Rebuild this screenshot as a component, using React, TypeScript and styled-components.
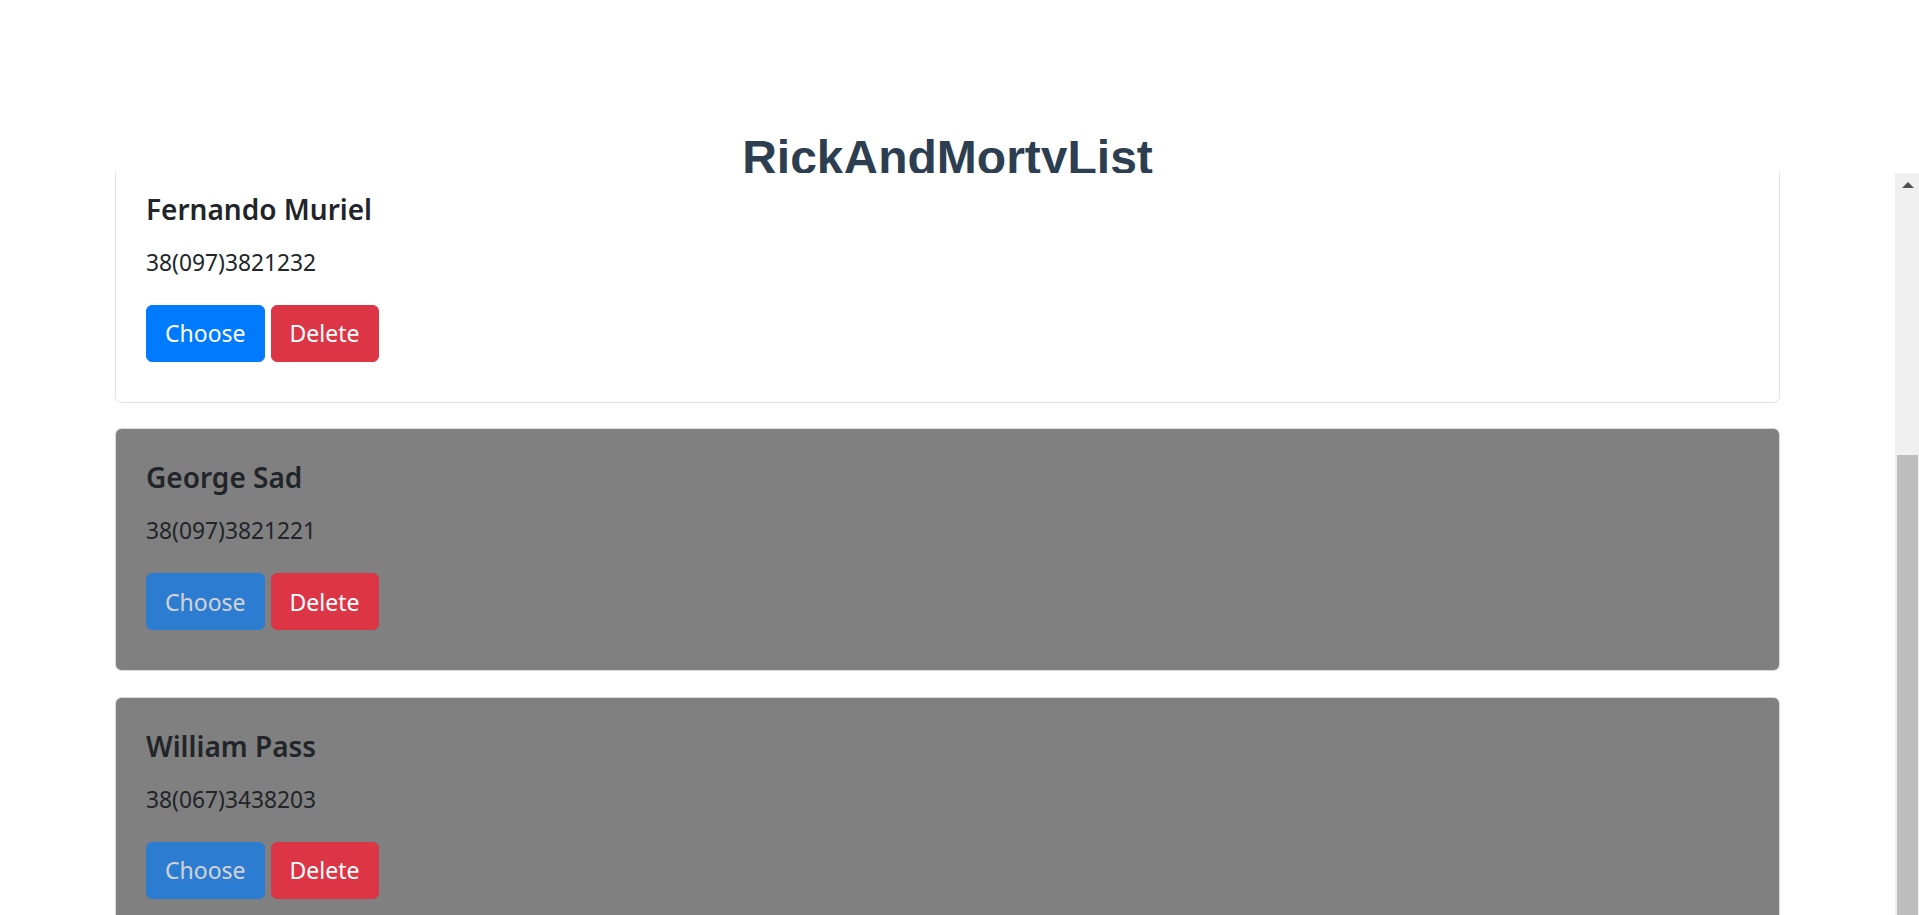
import React, { useLayoutEffect, useRef } from "react";
import styled, { createGlobalStyle } from "styled-components";

const GlobalStyle = createGlobalStyle`
  html, body {
    margin: 0;
    padding: 0;
    height: 100%;
    overflow: hidden;
    background: #ffffff;
  }
  * { box-sizing: border-box; }
`;

const Page = styled.div`
  height: 100vh;
  display: flex;
  flex-direction: column;
  overflow: hidden;
  font-family: "Noto Sans", "Open Sans", sans-serif;
  color: #212529;
`;

const Header = styled.header`
  flex: none;
  height: 173px;
  overflow: hidden;
  padding: 130px 24px 0 0;
  text-align: center;
`;

const Title = styled.h1`
  margin: 0;
  font-family: "Liberation Sans", Arial, sans-serif;
  font-weight: 700;
  font-size: 48px;
  line-height: 55px;
  color: #2c3e50;
`;

const ListArea = styled.main`
  flex: none;
  height: 100vh;
  display: flex;
`;

const Viewport = styled.div`
  flex: 1;
  min-width: 0;
  height: 100%;
  overflow: hidden;
`;

const ListContent = styled.div`
  padding: 150px 115px 0 115px;
`;

const ScrollBar = styled.div`
  flex: none;
  width: 24px;
  height: 100%;
  display: flex;
  flex-direction: column;
  background: #f0f0f0;
`;

const ScrollButton = styled.div`
  flex: none;
  height: 24px;
  display: flex;
  align-items: center;
  justify-content: center;
  padding-bottom: 1px;
`;

const UpArrow = styled.span`
  width: 0;
  height: 0;
  border-left: 6px solid transparent;
  border-right: 6px solid transparent;
  border-bottom: 6px solid #505050;
  margin-left: 1px;
`;

const Thumb = styled.div<{ $offset: number; $size: number }>`
  flex: none;
  margin: ${(p) => p.$offset}px 1px 0 2px;
  height: ${(p) => p.$size}px;
  background: #bdbdbd;
`;

const Card = styled.section<{ $chosen: boolean }>`
  margin-bottom: 25.5px;
  border: 1.5px solid ${(p) => (p.$chosen ? "#d9d9d9" : "#e0e0e0")};
  border-radius: 6px;
  background-color: ${(p) => (p.$chosen ? "#808080" : "#ffffff")};
  background-clip: padding-box;
  padding: 30px 30px 40px 30px;
`;

const Name = styled.h5`
  margin: 0 0 18px 0;
  font-size: 28px;
  font-weight: 600;
  line-height: 36px;
  color: #212529;
`;

const Phone = styled.p`
  margin: 0 0 24px 0;
  font-size: 22.8px;
  line-height: 36px;
  color: #212529;
`;

const Actions = styled.div`
  display: flex;
  gap: 6px;
`;

const Button = styled.button<{ $variant: "primary" | "danger" }>`
  height: 57px;
  padding: 9px 18px;
  border: 1.5px solid ${(p) => (p.$variant === "primary" ? "#007bff" : "#dc3545")};
  border-radius: 6px;
  background: ${(p) => (p.$variant === "primary" ? "#007bff" : "#dc3545")};
  color: #ffffff;
  font-family: "Noto Sans", "Open Sans", sans-serif;
  font-size: 23px;
  line-height: 36px;
  cursor: pointer;

  &:disabled {
    opacity: 0.65;
    cursor: default;
  }
`;

type Contact = { name: string; phone: string; chosen: boolean };

const contacts: Contact[] = [
  { name: "Adam Smith", phone: "38(050)1234567", chosen: false },
  { name: "Fernando Muriel", phone: "38(097)3821232", chosen: false },
  { name: "George Sad", phone: "38(097)3821221", chosen: true },
  { name: "William Pass", phone: "38(067)3438203", chosen: true },
  { name: "Mark Twist", phone: "38(063)5512098", chosen: false },
];

const SCROLL_TOP = 432;

export default function App() {
  const viewRef = useRef<HTMLDivElement>(null);

  useLayoutEffect(() => {
    if (viewRef.current) viewRef.current.scrollTop = SCROLL_TOP;
  }, []);

  return (
    <Page>
      <GlobalStyle />
      <Header>
        <Title>RickAndMortyList</Title>
      </Header>
      <ListArea>
        <Viewport ref={viewRef}>
          <ListContent>
            {contacts.map((c) => (
              <Card key={c.phone} $chosen={c.chosen}>
                <Name>{c.name}</Name>
                <Phone>{c.phone}</Phone>
                <Actions>
                  <Button $variant="primary" disabled={c.chosen}>
                    Choose
                  </Button>
                  <Button $variant="danger">Delete</Button>
                </Actions>
              </Card>
            ))}
          </ListContent>
        </Viewport>
        <ScrollBar aria-hidden="true">
          <ScrollButton>
            <UpArrow />
          </ScrollButton>
          <Thumb $offset={258} $size={544} />
        </ScrollBar>
      </ListArea>
    </Page>
  );
}
